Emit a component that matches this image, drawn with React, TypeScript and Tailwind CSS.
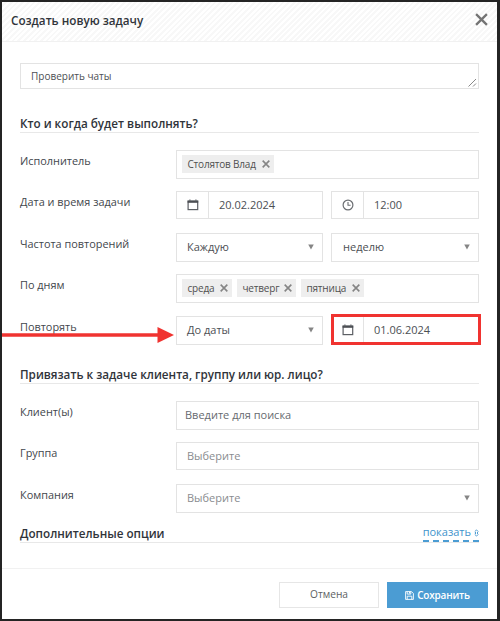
import type { ReactNode } from 'react';

const cx = (...names: (string | undefined)[]) => names.filter(Boolean).join(' ');

function CalendarIcon() {
  return (
    <svg width="12" height="12" viewBox="0 0 12 12" fill="none">
      <rect x="1.1" y="2" width="9.6" height="8.6" stroke="#5c5f64" strokeWidth="1.2" />
      <path d="M0.6 2.8h10.6" stroke="#4a4d52" strokeWidth="2" />
      <path d="M2.9 0.5v1.8M8.9 0.5v1.8" stroke="#6b6e72" strokeWidth="1.3" />
    </svg>
  );
}

function ClockIcon() {
  return (
    <svg width="12" height="12" viewBox="0 0 12 12" fill="none" stroke="#6b6e72">
      <circle cx="6" cy="6" r="4.9" strokeWidth="1.2" />
      <path d="M6 3v3.2h2.6" strokeWidth="1.1" />
    </svg>
  );
}

function Cross({ size, width, color }: { size: number; width: number; color: string }) {
  return (
    <svg width={size} height={size} viewBox="0 0 12 12" fill="none">
      <path d="M1 1l10 10M11 1L1 11" stroke={color} strokeWidth={width} />
    </svg>
  );
}

function SaveIcon() {
  return (
    <svg width="9" height="9" viewBox="0 0 9 9" fill="none" stroke="white" strokeWidth="0.9">
      <path d="M0.6 0.6h5.9l1.9 1.9v5.9H0.6z" />
      <path d="M2.2 0.6v2.5h3.6V0.6M2.2 8.4V5.2h4.6v3.2" />
      <path d="M4.6 0.8v1.8" strokeWidth="1.1" />
    </svg>
  );
}

function Caret() {
  return (
    <svg width="6" height="6" viewBox="0 0 6 6" className="mr-2 mb-px shrink-0">
      <path d="M0.2 0.6h5.6L3 5.4z" fill="#858585" />
    </svg>
  );
}

function Row({ label, className, children }: { label: string; className?: string; children: ReactNode }) {
  return (
    <div className={cx('flex', className)}>
      <div className="w-[156px] shrink-0 pt-[3px] text-[10.9px] leading-4 text-[#42464c]">{label}</div>
      {children}
    </div>
  );
}

function Box({ className, children }: { className?: string; children: ReactNode }) {
  return <div className={cx('flex items-center border border-[#e3e3e3] bg-white', className)}>{children}</div>;
}

function Select({ value, className }: { value: string; className?: string }) {
  return (
    <Box className={cx('justify-between', className)}>
      <span>{value}</span>
      <Caret />
    </Box>
  );
}

function IconInput({ icon, value, className }: { icon: ReactNode; value: string; className?: string }) {
  return (
    <Box className={className}>
      <div className="flex h-full w-8 shrink-0 grow-0 items-center justify-center border-r border-[#e3e3e3]">{icon}</div>
      <span className="pl-2.5">{value}</span>
    </Box>
  );
}

function Tag({ children, className }: { children: ReactNode; className?: string }) {
  return (
    <span className={cx('flex h-[18px] items-center justify-between bg-[#eeeeee] pr-1 pl-[5.5px] text-[10px] tracking-[-0.2px] text-[#505050]', className)}>
      {children}
      <Cross size={8} width={2.4} color="#858585" />
    </span>
  );
}

function SectionTitle({ children, className }: { children: ReactNode; className?: string }) {
  return (
    <div className={cx('h-[18px] border-b border-[#e8e8e8] text-[11.7px] leading-[17px] font-semibold text-[#30343a]', className)}>
      {children}
    </div>
  );
}

export default function App() {
  return (
    <div className="flex h-[621px] w-[500px] flex-col border-2 border-r-[3px] border-[#242424] bg-white font-['Open_Sans','Noto_Sans',sans-serif] text-[11px] text-[#4c4f54]">
      <header className="flex h-10 shrink-0 items-center justify-between border-b border-[#f1f1f1] bg-[repeating-linear-gradient(135deg,#ffffff_0px,#ffffff_2px,#f8f8f8_2px,#f8f8f8_4px)] pr-[9px] pl-[9px]">
        <h1 className="-mt-px text-[11.7px] font-semibold text-[#30343a]">Создать новую задачу</h1>
        <div className="-mt-1">
          <Cross size={13} width={2.1} color="#747474" />
        </div>
      </header>

      <main className="h-[527px] shrink-0 border-b border-[#f1f1f1] pr-[18px] pl-[18px]">
        <Box className="relative mt-[21px] h-[26px] pl-2.5 text-[10px]">
          <span>Проверить чаты</span>
          <svg width="9" height="9" viewBox="0 0 9 9" fill="none" stroke="#888" className="absolute right-px bottom-px">
            <path d="M0.5 8.5l7.5-7.5M5 8.5L8 5.5" />
          </svg>
        </Box>

        <SectionTitle className="mt-[26px]">Кто и когда будет выполнять?</SectionTitle>

        <Row label="Исполнитель" className="mt-[17px] h-[41px]">
          <Box className="h-[29px] flex-1 pb-px pl-[5px]">
            <Tag className="w-[92px]">Столятов Влад</Tag>
          </Box>
        </Row>
        <Row label="Дата и время задачи" className="h-[42px]">
          <IconInput icon={<CalendarIcon />} value="20.02.2024" className="mr-2 h-7 w-[147px]" />
          <IconInput icon={<ClockIcon />} value="12:00" className="h-7 flex-1" />
        </Row>
        <Row label="Частота повторений" className="h-[41px]">
          <Select value="Каждую" className="mr-2 h-[29px] w-[147px] pl-2.5" />
          <Select value="неделю" className="h-[29px] flex-1 pl-[11px]" />
        </Row>
        <Row label="По дням" className="h-[42px]">
          <Box className="h-[29px] flex-1 gap-[5px] pb-px pl-[5px]">
            <Tag className="w-[50px]">среда</Tag>
            <Tag className="w-[59px]">четверг</Tag>
            <Tag className="w-[63px]">пятница</Tag>
          </Box>
        </Row>
        <Row label="Повторять" className="relative h-[41px]">
          <Select value="До даты" className="mr-2 h-[29px] w-[147px] pl-2.5" />
          <IconInput icon={<CalendarIcon />} value="01.06.2024" className="h-7 flex-1" />
          {/* Callout frame and arrow over the end date */}
          <div className="absolute -top-[2px] -right-[2px] h-[31px] w-[150px] border-[3px] border-[#f03330]" />
          <svg width="172" height="18" viewBox="0 0 172 18" className="absolute top-[10px] -left-[18px]">
            <path d="M0 9h158" stroke="#f03330" strokeWidth="3.4" />
            <path d="M155.5 1v16l16.5-8z" fill="#f03330" />
          </svg>
        </Row>

        <SectionTitle className="mt-[9px]">Привязать к задаче клиента, группу или юр. лицо?</SectionTitle>

        <Row label="Клиент(ы)" className="mt-[17px] h-[41px]">
          <Box className="h-[29px] flex-1 pl-2 text-[#666a70]">Введите для поиска</Box>
        </Row>
        <Row label="Группа" className="h-[42px]">
          <Box className="h-7 flex-1 pl-2.5 text-[#8a8c90]">Выберите</Box>
        </Row>
        <Row label="Компания" className="h-[41px]">
          <Select value="Выберите" className="h-[29px] flex-1 pl-2.5 text-[#8a8c90]" />
        </Row>

        <div className="flex h-[18px] justify-between border-b border-[#e8e8e8]">
          <h2 className="text-[11.7px] leading-[17px] font-semibold text-[#30343a]">Дополнительные опции</h2>
          <a className="flex h-[17px] items-center border-b-2 border-dashed border-b-[#4b9cd3] font-medium text-[#3e93cc]">
            показать
            <svg width="5" height="8" viewBox="0 0 5 8" fill="none" stroke="#3e93cc" strokeWidth="0.9" className="ml-[3px]">
              <path d="M0.7 2.7L2.5 0.9l1.8 1.8M0.7 5.3l1.8 1.8 1.8-1.8M1.5 3v2M3.5 3v2" />
            </svg>
          </a>
        </div>
      </main>

      <footer className="flex justify-end gap-2 pt-[13px] pr-[9px] text-[10px]">
        <button className="h-[26px] w-[100px] border border-[#e6e6e6] text-[10.2px] text-[#5c5f63]">Отмена</button>
        <button className="flex h-[26px] w-[101px] items-center justify-center gap-[3px] bg-[#4b9cd3] text-[10px] font-semibold tracking-[-0.2px] text-white">
          <SaveIcon />
          Сохранить
        </button>
      </footer>
    </div>
  );
}
